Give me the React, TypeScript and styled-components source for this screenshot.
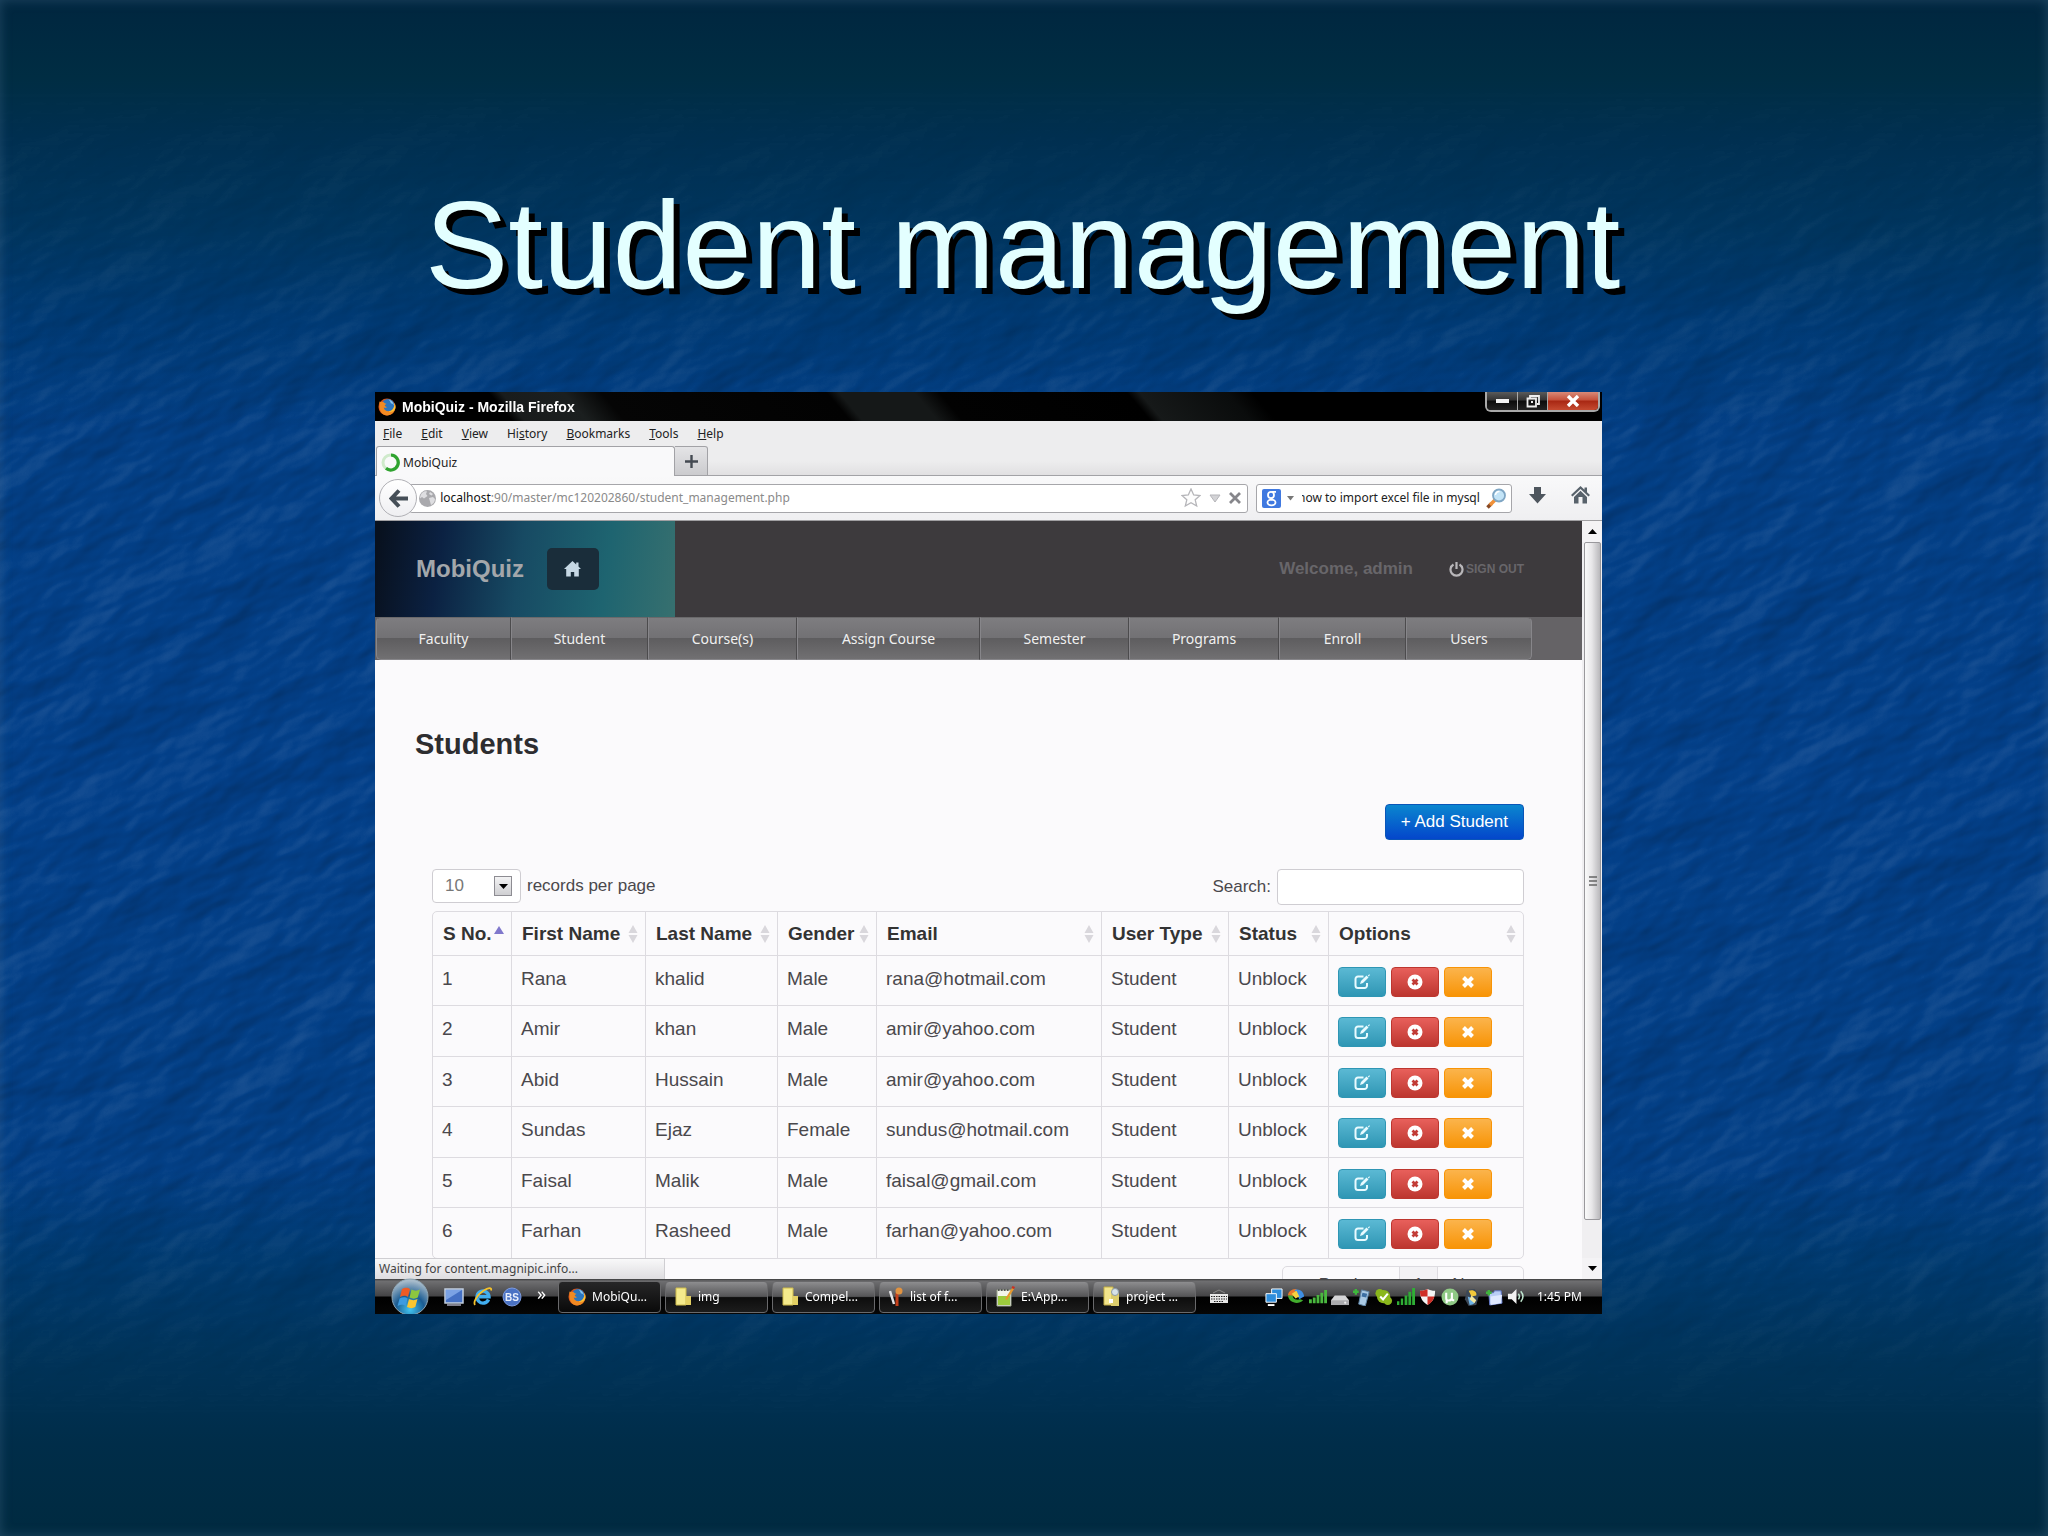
import React, { useEffect, useRef } from 'react';
import styled, { createGlobalStyle, css } from 'styled-components';

const UI = `"Noto Sans", "Open Sans", "DejaVu Sans", sans-serif`;
const SANS = `"Liberation Sans", Arial, sans-serif`;

const GlobalStyle = createGlobalStyle`
  *, *::before, *::after { box-sizing: border-box; }
  body { margin: 0; background: #003f8a; }
  button, input, select { font: inherit; color: inherit; margin: 0; }
  button { padding: 0; border: 0; background: none; }
  a { color: inherit; text-decoration: none; }
`;

/* ---------- slide ---------- */

const Slide = styled.main`
  position: relative;
  display: flex;
  flex-direction: column;
  height: 100vh;
  min-height: 900px;
  padding: 173px 446px 222px 375px;
  background: linear-gradient(180deg, #00263f 0%, #002d43 5%, #002f50 9%, #00355f 15%, #003a75 21%, #033f86 28%, #03408a 50%, #033f86 76%, #003a70 82%, #00335a 88%, #002d49 94%, #002a40 100%);
  box-shadow: inset 0 0 12px rgba(90, 130, 160, 0.35);
`;

const Texture = styled.svg`
  position: absolute;
  inset: 0;
  width: 100%;
  height: 100%;
  mix-blend-mode: hard-light;
  opacity: 0.3;
  mask-image: linear-gradient(180deg, transparent 6%, #000 28%, #000 76%, transparent 92%);
`;

const SlideTitle = styled.h1`
  position: relative;
  margin: 0 0 75px 50px;
  font: 400 125px/144px ${SANS};
  color: #e3ffff;
  text-shadow: 6px 6px 0 #000;
  white-space: nowrap;
`;

/* ---------- browser window ---------- */

const Window = styled.section`
  position: relative;
  flex: 1;
  min-height: 0;
  display: flex;
  flex-direction: column;
  overflow: hidden;
  background: #fbfafc;
  font: 12px/20px ${UI};
  color: #222;
`;

const TitleBar = styled.header`
  display: flex;
  align-items: flex-start;
  justify-content: space-between;
  height: 29px;
  flex: none;
  padding: 0 2px 0 3px;
  background: linear-gradient(50deg, #000 11%, #191c1c 12%, #1b1f1f 17%, #050505 20%, #020202 38%, #151818 39%, #151818 45%, #020202 47%, #000 62%, #161919 63%, #0a0c0c 70%, #000 72%);
`;

const WindowTitle = styled.div`
  display: flex;
  align-items: center;
  gap: 6px;
  height: 29px;
  font: 700 14px/20px ${SANS};
  color: #fff;
`;

const WindowControls = styled.div`
  display: flex;
  height: 20px;
  border: 2px solid #a9a9a9;
  border-top: 0;
  border-radius: 0 0 6px 6px;
  overflow: hidden;
`;

const WindowControl = styled.button<{ $close?: boolean }>`
  display: grid;
  place-items: center;
  width: ${(p) => (p.$close ? '51px' : '30px')};
  background: ${(p) => (p.$close
    ? 'linear-gradient(#d88a78, #c4503a 45%, #a82713 50%, #c54a30)'
    : 'linear-gradient(#5a5a5a, #333 45%, #0c0c0c 50%, #222)')};
  & + & { border-left: 1px solid #a9a9a9; }
`;

const MenuBar = styled.nav`
  display: flex;
  align-items: center;
  gap: 19px;
  flex: none;
  height: 25px;
  padding: 0 8px;
  background: #ededee;
`;

const MenuItem = styled.button`
  line-height: 20px;
`;

const TabStrip = styled.div`
  display: flex;
  flex: none;
  height: 30px;
  padding-left: 1px;
  background: linear-gradient(#ededee 50%, #e0dfe1);
  box-shadow: inset 0 -1px 0 #a2a2a6;
`;

const BrowserTab = styled.button`
  display: flex;
  align-items: center;
  gap: 3px;
  width: 299px;
  padding: 2px 0 0 4px;
  background: #f9f9fa;
  border: 1px solid #a2a2a6;
  border-bottom: 0;
  border-radius: 3px 3px 0 0;
`;

const NewTab = styled.button`
  display: grid;
  place-items: center;
  width: 33px;
  background: linear-gradient(#e4e4e6, #cbcbce);
  border: 1px solid #a2a2a6;
  border-left: 0;
  border-radius: 0 3px 0 0;
`;

const Toolbar = styled.div`
  display: flex;
  align-items: center;
  flex: none;
  height: 45px;
  padding: 0 12px 0 4px;
  background: linear-gradient(#f9f9fa, #efeff1);
  border-bottom: 1px solid #a09fa2;
`;

const BackButton = styled.button`
  position: relative;
  display: grid;
  place-items: center;
  flex: none;
  width: 38px;
  height: 38px;
  margin-right: -8px;
  background: linear-gradient(#fff, #efeff2);
  border: 1px solid #b0b0b5;
  border-radius: 50%;
`;

const fieldBox = css`
  display: flex;
  align-items: center;
  height: 29px;
  background: #fff;
  border: 1px solid #a6a6aa;
  border-radius: 3px;
`;

const AddressBar = styled.div`
  ${fieldBox}
  flex: 1;
  gap: 8px;
  padding: 0 6px 0 8px;
`;

const Address = styled.div`
  flex: 1;
  display: flex;
  align-items: center;
  color: #8a8a8a;
  b { font-weight: 400; color: #111; }
`;

const SearchBar = styled.div`
  ${fieldBox}
  width: 256px;
  margin: 0 17px 0 8px;
  padding: 0 4px 0 5px;
  gap: 6px;
`;

const SearchInput = styled.input`
  flex: 1;
  min-width: 0;
  padding: 0;
  border: 0;
  outline: 0;
  background: transparent;
  margin-left: 2px;
`;

const ToolbarIcons = styled.div`
  display: flex;
  align-items: center;
  gap: 25px;
`;

/* ---------- page ---------- */

const Viewport = styled.div`
  position: relative;
  flex: 1;
  min-height: 0;
  display: flex;
`;

const Page = styled.div`
  flex: 1;
  min-width: 0;
  overflow: hidden;
  background: #fbfafc;
  font: 17px/24px ${SANS};
  color: #4a484c;
`;

const SiteHeader = styled.header`
  display: flex;
  align-items: center;
  justify-content: space-between;
  height: 96px;
  padding-right: 58px;
  background: #3d3a3d;
`;

const Brand = styled.div`
  display: flex;
  align-items: center;
  gap: 23px;
  width: 300px;
  height: 96px;
  padding-left: 41px;
  background: linear-gradient(98deg, #08111f 2%, #0b2142 22%, #174a63 48%, #1e6470 76%, #37706f 100%);
  font: 700 24px/28px ${SANS};
  color: #a3a7ab;
`;

const HomeLink = styled.a`
  display: grid;
  place-items: center;
  width: 52px;
  height: 42px;
  border-radius: 5px;
  background: #1a2d3a;
`;

const Account = styled.div`
  display: flex;
  align-items: center;
  gap: 36px;
  font: 700 17px/20px ${SANS};
  color: #68666a;
`;

const SignOut = styled.a`
  display: flex;
  align-items: center;
  gap: 2px;
  font-size: 12px;
`;

const SiteNav = styled.nav`
  display: flex;
  height: 43px;
  padding-left: 1px;
  background: #656366;
`;

const NavLink = styled.a<{ $width: number }>`
  flex: 0 0 ${(p) => p.$width}px;
  font: 14px/20px ${UI};
  padding: 11px 0 10px;
  text-align: center;
  color: #f0f0f0;
  background: linear-gradient(#7e7d80, #727174 48%, #5e5d5f 50%, #717072);
  border: 1px solid #87868a;
  border-right-color: #4c4b4d;
  border-top-color: #6a696b;
  &:first-child { border-radius: 5px 0 0 5px; }
  &:last-child { border-radius: 0 5px 5px 0; border-right-color: #87868a; }
`;

const Content = styled.div`
  padding: 68px 58px 0 57px;
`;

const Heading = styled.h2`
  margin: 0 0 0 -17px;
  font: 700 29px/32px ${SANS};
  color: #2d2d30;
`;

const Actions = styled.div`
  display: flex;
  justify-content: flex-end;
  margin-top: 44px;
`;

const AddButton = styled.button`
  height: 36px;
  padding: 0 15px;
  border: 1px solid #0a55b8;
  border-radius: 4px;
  background: linear-gradient(#0a86cf, #0446cb);
  color: #fff;
`;

const Controls = styled.div`
  display: flex;
  align-items: flex-start;
  justify-content: space-between;
  margin: 29px 0 6px;
`;

const Field = styled.label`
  display: flex;
  align-items: center;
  gap: 6px;
`;

const SelectShell = styled.span`
  position: relative;
  display: block;
`;

const PageSize = styled.select`
  display: block;
  appearance: none;
  width: 89px;
  height: 34px;
  padding: 0 12px;
  border: 1px solid #cfcdd2;
  border-radius: 4px;
  background: #fff;
  color: #777;
`;

const SelectArrow = styled.span`
  position: absolute;
  right: 9px;
  top: 7px;
  display: grid;
  place-items: center;
  width: 18px;
  height: 20px;
  border: 1px solid #8d8c92;
  background: linear-gradient(#f3f3f4, #cfcfd2);
  pointer-events: none;
`;

const FilterInput = styled.input`
  width: 247px;
  height: 36px;
  padding: 0 8px;
  border: 1px solid #cfcdd2;
  border-radius: 4px;
  background: #fff;
`;

const Table = styled.table`
  width: 100%;
  table-layout: fixed;
  border-collapse: separate;
  border-spacing: 0;
  border: 1px solid #dddbe0;
  border-radius: 5px;
  font-size: 19px;
  line-height: 24px;
  white-space: nowrap;
  tbody tr:nth-child(even) td { height: 51px; }
`;

const Th = styled.th`
  height: 43px;
  padding: 0 7px 0 10px;
  text-align: left;
  color: #333;
  & + & { border-left: 1px solid #dddbe0; }
`;

const SortButton = styled.button`
  display: flex;
  align-items: center;
  justify-content: space-between;
  width: 100%;
`;

const Td = styled.td`
  height: 50px;
  padding: 11px 8px 0 9px;
  vertical-align: top;
  border-top: 1px solid #dddbe0;
  & + & { border-left: 1px solid #dddbe0; }
`;

const RowActions = styled.div`
  display: flex;
  gap: 5px;
`;

const tones = {
  info: ['#5bb9d4', '#2f96b4'],
  danger: ['#e8605b', '#bd362f'],
  warning: ['#fbb44c', '#f89406'],
};

const RowAction = styled.button<{ $tone: keyof typeof tones }>`
  display: grid;
  place-items: center;
  width: 48px;
  height: 30px;
  border: 1px solid ${(p) => tones[p.$tone][1]};
  border-radius: 4px;
  background: linear-gradient(${(p) => tones[p.$tone].join(', ')});
`;

const Pager = styled.nav`
  display: flex;
  width: max-content;
  margin: 7px 0 0 auto;
  border: 1px solid #dddbe0;
  border-radius: 5px;
`;

const PagerButton = styled.button<{ $current?: boolean }>`
  padding: 6px 14px;
  background: ${(p) => (p.$current ? '#f3f2f5' : 'transparent')};
  & + & { border-left: 1px solid #dddbe0; }
`;

const Scrollbar = styled.div`
  display: flex;
  flex-direction: column;
  width: 20px;
  flex: none;
  background: #f0eff1;
`;

const ScrollArrow = styled.button`
  display: grid;
  place-items: center;
  height: 21px;
  flex: none;
  background: #f4f3f5;
`;

const ScrollThumb = styled.div`
  display: grid;
  place-items: center;
  flex: 1;
  margin: 0 1px 38px 2px;
  border: 1px solid #99989c;
  border-radius: 2px;
  background: linear-gradient(90deg, #fafafa, #e8e7e9 45%, #b9b8bb);
`;

const StatusBar = styled.div`
  position: absolute;
  left: 0;
  bottom: 0;
  width: 290px;
  height: 21px;
  padding-left: 4px;
  border: 1px solid #cfced2;
  border-width: 1px 1px 0 0;
  background: linear-gradient(#f8f8f9, #dedde0);
  color: #444;
`;

/* ---------- taskbar ---------- */

const Taskbar = styled.footer`
  display: flex;
  align-items: center;
  flex: none;
  height: 35px;
  padding: 0 20px 0 16px;
  background: linear-gradient(#3a3a3b, #6f6f71 6%, #444446 48%, #000 52%, #060606);
  color: #fff;
`;

const Start = styled.button`
  position: relative;
  width: 38px;
  height: 38px;
  margin-right: 15px;
`;

const QuickLaunch = styled.div`
  display: flex;
  align-items: center;
  gap: 9px;
  width: 114px;
`;

const More = styled.button`
  margin: -8px 0 0 6px;
  font-size: 18px;
`;

const Tasks = styled.div`
  display: flex;
  gap: 4px;
`;

const Task = styled.button<{ $active?: boolean }>`
  display: flex;
  align-items: center;
  gap: 6px;
  width: 103px;
  height: 32px;
  padding-left: 9px;
  border: 1px solid #69696b;
  border-radius: 4px;
  background: ${(p) => (p.$active
    ? 'linear-gradient(#262627, #0a0a0a)'
    : 'linear-gradient(#8d8d8f, #555557 48%, #0d0d0d 52%, #1c1c1c)')};
  white-space: nowrap;
`;

const Tray = styled.div`
  display: flex;
  align-items: center;
  gap: 4px;
  margin-left: auto;
`;

const KeyboardSlot = styled.div`
  display: flex;
  margin-left: 14px;
`;

const Clock = styled.time`
  margin-left: 8px;
`;

/* ---------- icons ---------- */

const Firefox = ({ size }: { size: number }) => (
  <svg width={size} height={size} viewBox="0 0 18 18">
    <circle cx="9" cy="9" r="8.5" fill="#d9541a" />
    <circle cx="10" cy="7.4" r="6.4" fill="#2c77c0" />
    <path d="M10 1.4c3 .3 5.600 2.600 6 6-1-1.600-2-2-3.200-2.200C12.500 3.500 11.500 2 10 1.400z" fill="#8cc8ee" />
    <path d="M1.500 3.500c-.3 1.200-.3 2 .1 3C.6 12 4 17.400 9 17.500c4.800 0 8.400-3.700 8.400-8.500 0-1.400-.3-2.600-.9-3.700.2 4.700-2.300 8-5.800 8-3 0-4.700-1.700-4.900-3.700 1 .5 2.300.3 3.200-.6C7.500 8.600 6.800 8 6.700 7c.6-.3 1.500-.5 1.700-1.300C7 5.500 6.300 4.900 5.800 4.200 4.300 4 2.700 4.200 1.500 3.500z" fill="#f28a22" />
    <path d="M16.500 5.300c.2 4.700-2.300 8-5.800 8 3 1.500 6-.5 6.600-3 .3-1.800 0-3.600-.8-5z" fill="#fcc93a" />
  </svg>
);

const Spinner = () => (
  <svg width="19" height="19" viewBox="0 0 19 19" fill="none">
    <circle cx="9.500" cy="9.500" r="7.500" stroke="#cfeacb" strokeWidth="3" />
    <path d="M10 2a7.500 7.500 0 1 1-5 13.300" stroke="#2fa32f" strokeWidth="3.200" />
  </svg>
);

const HouseIcon = () => (
  <svg width="17" height="16" viewBox="0 0 17 16" fill="#c6d8e4">
    <path d="M8.500 0 0 8h2.200v7.500h4.600V11h3.400v4.500h4.600V8H17l-2.500-2.400V1.500h-2.300v2z" />
  </svg>
);

const Globe = () => (
  <svg width="19" height="19" viewBox="0 0 19 19">
    <circle cx="9.500" cy="9.500" r="8.500" fill="#a9a9ad" />
    <path d="M4 4c2-2 4-2 5-1.500L8 5l1.500 2L6 9.500 4 8 2 9.500C2 7 3 5 4 4zM11 9l4-1 2 2c0 3-2 5-4 6l-1-3.500zM12 3l3 2-1.500 1.500L11 5z" fill="#dedee1" />
  </svg>
);

const SortIcon = ({ up }: { up?: boolean }) => (
  <svg width="10" height="20" viewBox="0 0 10 20">
    {up ? (
      <path d="M5 2l5 8H0z" fill="#8078cc" />
    ) : (
      <path d="M5 1l4.500 8h-9zM5 19l4.500-8h-9z" fill="#d9d7dc" />
    )}
  </svg>
);

const EditIcon = () => (
  <svg width="16" height="16" viewBox="0 0 16 16" fill="none" stroke="#e9fbff" strokeWidth="2">
    <path d="M9.500 2.500H4A2.500 2.500 0 0 0 1.500 5v6.500A2.500 2.500 0 0 0 4 14h6.500a2.500 2.500 0 0 0 2.500-2.500V9" />
    <path d="M6 10l1-3 5.500-5.500 2 2L9 9z" fill="#e9fbff" stroke="none" />
    <path d="M14.500 1l.8.8" />
  </svg>
);

const BlockIcon = () => (
  <svg width="16" height="16" viewBox="0 0 16 16" fill="none">
    <circle cx="8" cy="8" r="7.500" fill="#fff" />
    <path d="M5.500 5.500l5 5M10.500 5.500l-5 5" stroke="#c23c36" strokeWidth="2.800" />
  </svg>
);

const RemoveIcon = () => (
  <svg width="16" height="16" viewBox="0 0 16 16" fill="none" stroke="#fff" strokeWidth="4">
    <path d="M3.500 3.500l9 9M12.500 3.500l-9 9" />
  </svg>
);

const Orb = () => (
  <svg width="38" height="38" viewBox="0 0 38 38">
    <defs>
      <radialGradient id="orb" cx="50%" cy="85%" r="80%">
        <stop offset="0" stopColor="#42c4f0" />
        <stop offset=".5" stopColor="#1b5c92" />
        <stop offset="1" stopColor="#a9bccb" />
      </radialGradient>
    </defs>
    <circle cx="19" cy="19" r="18" fill="url(#orb)" stroke="#8ea6b5" />
    <path d="M11 11c3-2 6-1.500 8 0l-2 8c-2-1.500-5-1.800-8 0z" fill="#ef5b25" />
    <path d="M20.500 11.500c3 1.500 6 1.500 8.500 0l-2.200 8c-2.500 1.500-5.500 1.500-8.300 0z" fill="#8cc63e" />
    <path d="M8.600 20.500c3-1.800 6-1.500 8 0l-2 7.500c-2-1.500-5-1.800-8 0z" fill="#3d9be0" />
    <path d="M18 21c3 1.500 6 1.500 8.500 0l-2.200 8c-2.500 1.500-5.500 1.500-8.300 0z" fill="#fbc62f" />
  </svg>
);

const Desktop = () => (
  <svg width="20" height="18" viewBox="0 0 20 18">
    <rect x="1" y="1" width="18" height="14" fill="#4470c4" stroke="#c3cfdf" strokeWidth="1.500" />
    <path d="M2 2h16L2 12z" fill="#7ba2e4" />
    <path d="M3 17h14" stroke="#aab" strokeWidth="1.500" />
  </svg>
);

const Explorer = () => (
  <svg width="20" height="20" viewBox="0 0 20 20" fill="none">
    <path d="M15.500 12.500A6 6 0 1 1 16 9.700H6" stroke="#41aef0" strokeWidth="3.400" />
    <path d="M2 18C0 15 4 8 10 4s9-3.500 8-.5" stroke="#f4c22c" strokeWidth="1.800" />
  </svg>
);

const BsIcon = () => (
  <svg width="20" height="20" viewBox="0 0 20 20">
    <circle cx="10" cy="10" r="9" fill="#4a72c4" stroke="#7c9ade" />
    <text x="10" y="14" fontSize="10" fontWeight="700" textAnchor="middle" fill="#e9effc" fontFamily="Liberation Sans">BS</text>
  </svg>
);

const Folder = () => (
  <svg width="17" height="20" viewBox="0 0 17 20">
    <path d="M1 1h10v17H1z" fill="#f4ea8c" stroke="#cdbb4c" />
    <path d="M11 9h5v9h-5z" fill="#e2cf62" />
  </svg>
);

const ListIcon = () => (
  <svg width="15" height="20" viewBox="0 0 15 20" fill="none">
    <path d="M1 4l4 13" stroke="#e4e4e6" strokeWidth="2.500" />
    <path d="M8 19V6" stroke="#c43f1a" strokeWidth="3" />
    <circle cx="10" cy="4" r="3.500" fill="#e09240" />
  </svg>
);

const Notepad = () => (
  <svg width="19" height="21" viewBox="0 0 19 21">
    <path d="M1 4h14v16H1z" fill="#f3f5ea" stroke="#9aa58c" />
    <path d="M2 10h12v9H2z" fill="#9ccb3d" />
    <path d="M2 4h12" stroke="#555" strokeWidth="2" strokeDasharray="1.500 1.500" />
    <path d="M9 13l7-11 2 1-7 11z" fill="#e6982c" />
    <path d="M15.500 2l1-2 2.500 1-1 2z" fill="#cc2f20" />
  </svg>
);

const Project = () => (
  <svg width="17" height="21" viewBox="0 0 17 21">
    <path d="M1 1h9v18H1z" fill="#f2e48b" stroke="#c3af47" />
    <path d="M8 6h8v14H8z" fill="#dccd6c" />
    <circle cx="12" cy="6" r="3.500" fill="#d6e2ea" stroke="#8d9ba6" />
    <path d="M6 13h4v4H6z" fill="#fff" />
  </svg>
);

const Keyboard = () => (
  <svg width="18" height="15" viewBox="0 0 18 15">
    <path d="M0 5h18v9H0z" fill="#e8e8e8" />
    <path d="M1 7.500h16M1 10h16M4 12.500h10" stroke="#222" strokeWidth="1.200" strokeDasharray="1.500 1" />
    <path d="M3 4l6-3 6 3" stroke="#888" fill="none" />
  </svg>
);

const trayIcons: { name: string; art: React.ReactNode }[] = [
  { name: 'Network', art: (<><path d="M7 1h11v10H7z" fill="#2e8ddb" stroke="#fff" /><path d="M1 6h11v9H1z" fill="#2e8ddb" stroke="#fff" /><path d="M3 18h7" stroke="#fff" strokeWidth="2" /></>) },
  { name: 'Download manager', art: (<><path d="M1 8C1 3 6 1 10 1l1 8z" fill="#e8772a" /><path d="M8 2c5-2 10 2 10 7l-5 3z" fill="#3f8fe2" /><path d="M1 8c1 8 11 10 16 5l-3-1C10 13 6 12 6 8z" fill="#42ad2d" /><path d="M5 6l5-3 3 6-4 2z" fill="#f6d23f" /></>) },
  { name: 'Signal', art: (<path d="M0 16h3v-4H0zM4 16h3v-6H4zM8 16h3V7.500H8zM12 16h3V5h-3zM16 16h3V2h-3z" fill="#4ab83f" />) },
  { name: 'Drive', art: (<><path d="M4 8h11l4 5v5H0v-5z" fill="#d5d5d7" /><path d="M0 13h19v5H0z" fill="#ababae" /><circle cx="15" cy="15.500" r="1.200" fill="#eee" /></>) },
  { name: 'Phone', art: (<><path d="M9 2l8 2-4 15-7-2z" fill="#a9c9e4" stroke="#5f86a8" /><path d="M10 5l5 1-1 4-5-1z" fill="#3c6fa3" /><path d="M0 4h6M3 1v6" stroke="#3db83b" strokeWidth="2.500" /></>) },
  { name: 'Messenger', art: (<><circle cx="9" cy="9" r="7" fill="#8ab71c" /><circle cx="5" cy="5.500" r="4.500" fill="#8ab71c" /><circle cx="13.500" cy="13.500" r="4.500" fill="#8ab71c" /><path d="M5.500 9l3 3 5-6" stroke="#fff" strokeWidth="2.200" fill="none" /></>) },
  { name: 'Wireless', art: (<path d="M0 18h2.500v-4H0zM4 18h2.500v-7H4zM8 18h3V8H8zM12 18h3V4h-3zM16 18h3V0h-3z" fill="#2fae35" />) },
  { name: 'Security', art: (<><path d="M1 3c3 0 6-1 8-2 2 1 5 2 8 2 0 8-3 12-8 15C4 15 1 11 1 3z" fill="#f4f4f4" /><path d="M1 3c3 0 6-1 8-2v8H1.700C1.200 7 1 5 1 3z" fill="#cf2f27" /><path d="M9 9h7.300c-1.300 4-3.300 7-7.300 9z" fill="#cf2f27" /></>) },
  { name: 'Torrent', art: (<><circle cx="9.500" cy="9.500" r="9" fill="#8fc985" /><path d="M5.500 5v6c0 3 5 3 6 0V5v6c0 2 1 2 2.500 2M6 12v4" stroke="#fff" strokeWidth="2.200" fill="none" /></>) },
  { name: 'Updater', art: (<><path d="M4 2l8-1 5 6-3 11-8 1L2 12z" fill="#3b4756" /><path d="M6 3c5-2 9 1 8 5L9 9z" fill="#f1c83b" /><path d="M5 9l7 3c2 3-1 6-5 6z" fill="#6fb4e6" /><path d="M9 8l5 5-2 3-5-4z" fill="#f3e8a0" /></>) },
  { name: 'Shared folder', art: (<><path d="M4 5h5l1-2h7l1 13-13 2z" fill="#b9cdf5" stroke="#6076c8" /><path d="M6 9l12-2-1 9-11 2z" fill="#dfe9ff" /><path d="M1 5h6M4 2v6" stroke="#3fb53d" strokeWidth="2.500" /></>) },
  { name: 'Volume', art: (<><path d="M1 6h4l5-5v16l-5-5H1z" fill="#f2f2f2" /><path d="M12 6c1.500 2 1.500 4 0 6M14.500 3.500c3 3.500 3 7.500 0 11" stroke="#bfe6cf" strokeWidth="1.600" fill="none" /></>) },
];

/* ---------- data ---------- */

const menus = ['File', 'Edit', 'View', 'History', 'Bookmarks', 'Tools', 'Help'];
const underlineAt: Record<string, number> = { History: 2 };

const sections: [string, number][] = [
  ['Faculity', 135], ['Student', 137], ['Course(s)', 149], ['Assign Course', 183],
  ['Semester', 149], ['Programs', 150], ['Enroll', 127], ['Users', 126],
];

const columns: [string, number][] = [
  ['S No.', 78], ['First Name', 134], ['Last Name', 132], ['Gender', 99],
  ['Email', 225], ['User Type', 127], ['Status', 100], ['Options', 195],
];

const students = [
  ['1', 'Rana', 'khalid', 'Male', 'rana@hotmail.com', 'Student', 'Unblock'],
  ['2', 'Amir', 'khan', 'Male', 'amir@yahoo.com', 'Student', 'Unblock'],
  ['3', 'Abid', 'Hussain', 'Male', 'amir@yahoo.com', 'Student', 'Unblock'],
  ['4', 'Sundas', 'Ejaz', 'Female', 'sundus@hotmail.com', 'Student', 'Unblock'],
  ['5', 'Faisal', 'Malik', 'Male', 'faisal@gmail.com', 'Student', 'Unblock'],
  ['6', 'Farhan', 'Rasheed', 'Male', 'farhan@yahoo.com', 'Student', 'Unblock'],
];

const tasks: [string, React.ReactNode][] = [
  ['MobiQu...', <Firefox size={18} />],
  ['img', <Folder />],
  ['Compel...', <Folder />],
  ['list of f...', <ListIcon />],
  ['E:\\App...', <Notepad />],
  ['project ...', <Project />],
];

/* ---------- parts ---------- */

function MenuLabel({ text }: { text: string }) {
  const at = underlineAt[text] ?? 0;
  return <>{text.slice(0, at)}<u>{text[at]}</u>{text.slice(at + 1)}</>;
}

function BrowserSearch() {
  const ref = useRef<HTMLInputElement>(null);
  useEffect(() => {
    if (ref.current) ref.current.scrollLeft = ref.current.scrollWidth;
  }, []);
  return (
    <SearchBar>
      <svg width="19" height="19" viewBox="0 0 19 19">
        <rect width="19" height="19" rx="2" fill="#4079e0" />
        <g fill="none" stroke="#fff" strokeWidth="1.800">
          <ellipse cx="9" cy="6" rx="3" ry="3.200" />
          <ellipse cx="9.500" cy="13.500" rx="4" ry="2.800" />
          <path d="M10.500 9.500l-1.500 1.500M10 2.800h4" />
        </g>
      </svg>
      <svg width="7" height="5" viewBox="0 0 7 5"><path d="M0 0h7L3.500 4.500z" fill="#777" /></svg>
      <SearchInput ref={ref} aria-label="Search the web" defaultValue="how to import excel file in mysql" />
      <svg width="21" height="21" viewBox="0 0 21 21">
        <path d="M1.500 19.500l4-4" stroke="#8a4a24" strokeWidth="3.500" />
        <path d="M4 17l5-5" stroke="#f0913a" strokeWidth="3.500" />
        <circle cx="13" cy="7.500" r="6" fill="#c3e4f7" stroke="#7fa6c4" strokeWidth="1.800" />
        <path d="M9.500 7a3.500 3.500 0 0 1 4-3.500" stroke="#fff" strokeWidth="1.500" fill="none" />
      </svg>
    </SearchBar>
  );
}

function BrowserChrome() {
  return (
    <>
      <TitleBar>
        <WindowTitle><Firefox size={18} />MobiQuiz - Mozilla Firefox</WindowTitle>
        <WindowControls>
          <WindowControl aria-label="Minimize">
            <svg width="13" height="5"><rect width="13" height="4" fill="#f2f2f2" /></svg>
          </WindowControl>
          <WindowControl aria-label="Restore">
            <svg width="14" height="13" viewBox="0 0 14 13" fill="none" stroke="#eee" strokeWidth="1.800">
              <path d="M4 3V1h9v8h-2" /><path d="M1.500 3.500h8.500v8H1.500z" /><path d="M5 7h2" />
            </svg>
          </WindowControl>
          <WindowControl $close aria-label="Close">
            <svg width="14" height="12" viewBox="0 0 14 12" stroke="#fff" strokeWidth="3.400"><path d="M2 1l10 10M12 1L2 11" /></svg>
          </WindowControl>
        </WindowControls>
      </TitleBar>
      <MenuBar>
        {menus.map((m) => <MenuItem key={m}><MenuLabel text={m} /></MenuItem>)}
      </MenuBar>
      <TabStrip>
        <BrowserTab><Spinner />MobiQuiz</BrowserTab>
        <NewTab aria-label="New tab">
          <svg width="13" height="13" stroke="#444a52" strokeWidth="2.400"><path d="M6.500 0v13M0 6.500h13" /></svg>
        </NewTab>
      </TabStrip>
      <Toolbar>
        <BackButton aria-label="Back">
          <svg width="19" height="19" viewBox="0 0 19 19" fill="none" stroke="#454e57" strokeWidth="4"><path d="M10 1.500l-7.500 8 7.500 8M3 9.500h16" /></svg>
        </BackButton>
        <AddressBar>
          <Address><Globe />&nbsp;<span><b>localhost</b>:90/master/mc120202860/student_management.php</span></Address>
          <svg width="20" height="20" viewBox="0 0 20 20"><path d="M10 1l2.700 6 6.300.6-4.800 4.200L15.700 18 10 14.800 4.300 18l1.500-6.200L1 7.600 7.300 7z" fill="#fdfdfd" stroke="#b5b5b9" strokeWidth="1.300" /></svg>
          <svg width="12" height="9" viewBox="0 0 12 9"><path d="M1 1h10L6 8z" fill="#d3d3d6" stroke="#b5b5b9" /></svg>
          <svg width="12" height="12" viewBox="0 0 12 12" stroke="#86868b" strokeWidth="2.800"><path d="M1 1l10 10M11 1L1 11" /></svg>
        </AddressBar>
        <BrowserSearch />
        <ToolbarIcons>
          <button aria-label="Downloads"><svg width="17" height="17" viewBox="0 0 17 17" fill="#4e565e"><path d="M5 0h7v7h5l-8.500 9.500L0 7h5z" /></svg></button>
          <button aria-label="Home"><svg width="19" height="18" viewBox="0 0 19 18" fill="#58626b"><path d="M9.500 0L0 9l1.500 1.500L9.500 3l8 7.500L19 9l-3-2.800V1.500h-2.500v2.300z" /><path d="M9.500 4.800L3 11v6.500h4.500V11h4v6.500H16V11z" /></svg></button>
        </ToolbarIcons>
      </Toolbar>
    </>
  );
}

function StudentTable() {
  return (
    <Table>
      <colgroup>{columns.map(([name, w]) => <col key={name} style={{ width: w }} />)}</colgroup>
      <thead>
        <tr>
          {columns.map(([name], i) => (
            <Th key={name} scope="col"><SortButton>{name}<SortIcon up={i === 0} /></SortButton></Th>
          ))}
        </tr>
      </thead>
      <tbody>
        {students.map((row) => (
          <tr key={row[0]}>
            {row.map((cell, i) => <Td key={i}>{cell}</Td>)}
            <Td>
              <RowActions>
                <RowAction $tone="info" aria-label="Edit"><EditIcon /></RowAction>
                <RowAction $tone="danger" aria-label="Block"><BlockIcon /></RowAction>
                <RowAction $tone="warning" aria-label="Delete"><RemoveIcon /></RowAction>
              </RowActions>
            </Td>
          </tr>
        ))}
      </tbody>
    </Table>
  );
}

function StudentPage() {
  return (
    <Viewport>
      <Page>
        <SiteHeader>
          <Brand>MobiQuiz<HomeLink href="#home" aria-label="Home"><HouseIcon /></HomeLink></Brand>
          <Account>
            Welcome, admin
            <SignOut href="#signout">
              <svg width="15" height="15" viewBox="0 0 15 15" fill="none" stroke="#b9b7ba" strokeWidth="2.200">
                <path d="M4.500 2.500a6 6 0 1 0 6 0M7.500 0v7" />
              </svg>
              SIGN OUT
            </SignOut>
          </Account>
        </SiteHeader>
        <SiteNav>
          {sections.map(([name, w]) => <NavLink key={name} href="#" $width={w}>{name}</NavLink>)}
        </SiteNav>
        <Content>
          <Heading>Students</Heading>
          <Actions><AddButton>+ Add Student</AddButton></Actions>
          <Controls>
            <Field>
              <SelectShell>
                <PageSize defaultValue="10"><option>10</option><option>25</option><option>50</option></PageSize>
                <SelectArrow><svg width="9" height="5"><path d="M0 0h9L4.500 5z" /></svg></SelectArrow>
              </SelectShell>
              records per page
            </Field>
            <Field>Search:<FilterInput type="text" /></Field>
          </Controls>
          <StudentTable />
          <Pager aria-label="Pages">
            <PagerButton>← Previous</PagerButton>
            <PagerButton $current>1</PagerButton>
            <PagerButton>Next →</PagerButton>
          </Pager>
        </Content>
      </Page>
      <Scrollbar>
        <ScrollArrow aria-label="Scroll up"><svg width="9" height="5"><path d="M0 5h9L4.500 0z" /></svg></ScrollArrow>
        <ScrollThumb><svg width="8" height="10" stroke="#666" strokeWidth="1.500"><path d="M0 1h8M0 5h8M0 9h8" /></svg></ScrollThumb>
        <ScrollArrow aria-label="Scroll down"><svg width="9" height="5"><path d="M0 0h9L4.500 5z" /></svg></ScrollArrow>
      </Scrollbar>
      <StatusBar>Waiting for content.magnipic.info...</StatusBar>
    </Viewport>
  );
}

function DesktopTaskbar() {
  return (
    <Taskbar>
      <Start aria-label="Start"><Orb /></Start>
      <QuickLaunch><Desktop /><Explorer /><BsIcon /><More aria-label="More shortcuts">»</More></QuickLaunch>
      <Tasks>
        {tasks.map(([label, icon], i) => <Task key={label} $active={i === 0}>{icon}{label}</Task>)}
      </Tasks>
      <KeyboardSlot><Keyboard /></KeyboardSlot>
      <Tray>
        {trayIcons.map(({ name, art }) => (
          <svg key={name} width="18" height="18" viewBox="0 0 19 19" role="img" aria-label={name}>{art}</svg>
        ))}
        <Clock>1:45 PM</Clock>
      </Tray>
    </Taskbar>
  );
}

export default function App() {
  return (
    <>
      <GlobalStyle />
      <Slide>
        <Texture aria-hidden="true">
          <defs>
            <filter id="ripple" x="0" y="0" width="100%" height="100%" colorInterpolationFilters="sRGB">
              <feTurbulence type="fractalNoise" baseFrequency="0.008 0.017" numOctaves="4" seed="12" />
              <feDiffuseLighting surfaceScale="9" diffuseConstant="0.66" lightingColor="#fff">
                <feDistantLight azimuth="235" elevation="45" />
              </feDiffuseLighting>
            </filter>
          </defs>
          <g transform="rotate(-24)">
            <rect x="-800" y="-100" width="3000" height="2500" filter="url(#ripple)" />
          </g>
        </Texture>
        <SlideTitle>Student management</SlideTitle>
        <Window>
          <BrowserChrome />
          <StudentPage />
          <DesktopTaskbar />
        </Window>
      </Slide>
    </>
  );
}
